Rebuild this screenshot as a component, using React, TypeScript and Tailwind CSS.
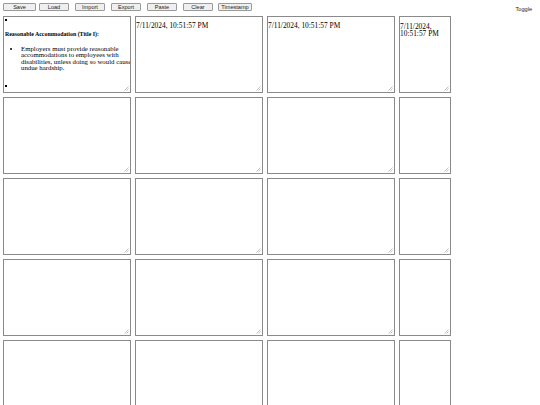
import React from "react";

const buttons: { label: string; w: string; ml: string }[] = [
  { label: "Save", w: "w-[33px]", ml: "ml-[3px]" },
  { label: "Load", w: "w-[30px]", ml: "ml-[3px]" },
  { label: "Import", w: "w-[30px]", ml: "ml-[6px]" },
  { label: "Export", w: "w-[30px]", ml: "ml-[6px]" },
  { label: "Paste", w: "w-[30px]", ml: "ml-[6px]" },
  { label: "Clear", w: "w-[30px]", ml: "ml-[6px]" },
  { label: "Timestamp", w: "w-[34px]", ml: "ml-[5px]" },
];

const TS = "7/11/2024, 10:51:57 PM";

function Grip() {
  return (
    <svg className="absolute right-[1px] bottom-[1px]" width="5" height="5" viewBox="0 0 5 5">
      <line x1="0.5" y1="4.5" x2="4.5" y2="0.5" stroke="#999" strokeWidth="0.6" />
      <line x1="2.5" y1="4.5" x2="4.5" y2="2.5" stroke="#999" strokeWidth="0.6" />
    </svg>
  );
}

function Cell({ children }: { children?: React.ReactNode }) {
  return (
    <div className="relative h-[77px] border border-[#8a8a8a] bg-white overflow-hidden text-[7.4px] leading-[7px] text-black [font-family:'Liberation_Serif',serif]">
      {children}
      <Grip />
    </div>
  );
}

function Sq() {
  return <span className="block w-[2px] h-[2px] bg-black" />;
}

export default function App() {
  const rows = [0, 1, 2, 3, 4];
  return (
    <div className="w-[540px] h-[405px] overflow-hidden bg-white relative [font-family:'Liberation_Sans',Arial,sans-serif]">
      <div className="flex items-start h-[16px] pt-[3px]">
        {buttons.map((b) => (
          <button
            key={b.label}
            className={`${b.w} ${b.ml} h-[8px] border border-[#9a9a9a] bg-[#efefef] rounded-[1px] text-[5.6px] leading-[6px] text-[#222] flex items-center justify-center`}
          >
            {b.label}
          </button>
        ))}
        <span className="ml-auto mr-[8px] mt-[3px] text-[5.6px] leading-[6px] text-[#222]">Toggle</span>
      </div>
      <div className="ml-[3px] grid grid-cols-[128px_128px_128px_52px] gap-x-[4px] gap-y-[4px]">
        {rows.map((r) => (
          <React.Fragment key={r}>
            <Cell>
              {r === 0 && (
                <div className="pl-[1px] pt-[2px]">
                  <Sq />
                  <div className="mt-[10px] font-bold text-[5.9px] leading-[7px]">Reasonable Accommodation (Title I):</div>
                  <ul className="mt-[8px] pl-[16px] w-[132px] list-disc text-[6.8px] leading-[6.3px]">
                    <li>Employers must provide reasonable accommodations to employees with disabilities, unless doing so would cause undue hardship.</li>
                  </ul>
                  <div className="mt-[14px]">
                    <Sq />
                  </div>
                </div>
              )}
            </Cell>
            <Cell>{r === 0 && <div className="pt-[5px]">{TS}</div>}</Cell>
            <Cell>{r === 0 && <div className="pt-[5px]">{TS}</div>}</Cell>
            <Cell>{r === 0 && <div className="pt-[6px]">{TS}</div>}</Cell>
          </React.Fragment>
        ))}
      </div>
    </div>
  );
}
